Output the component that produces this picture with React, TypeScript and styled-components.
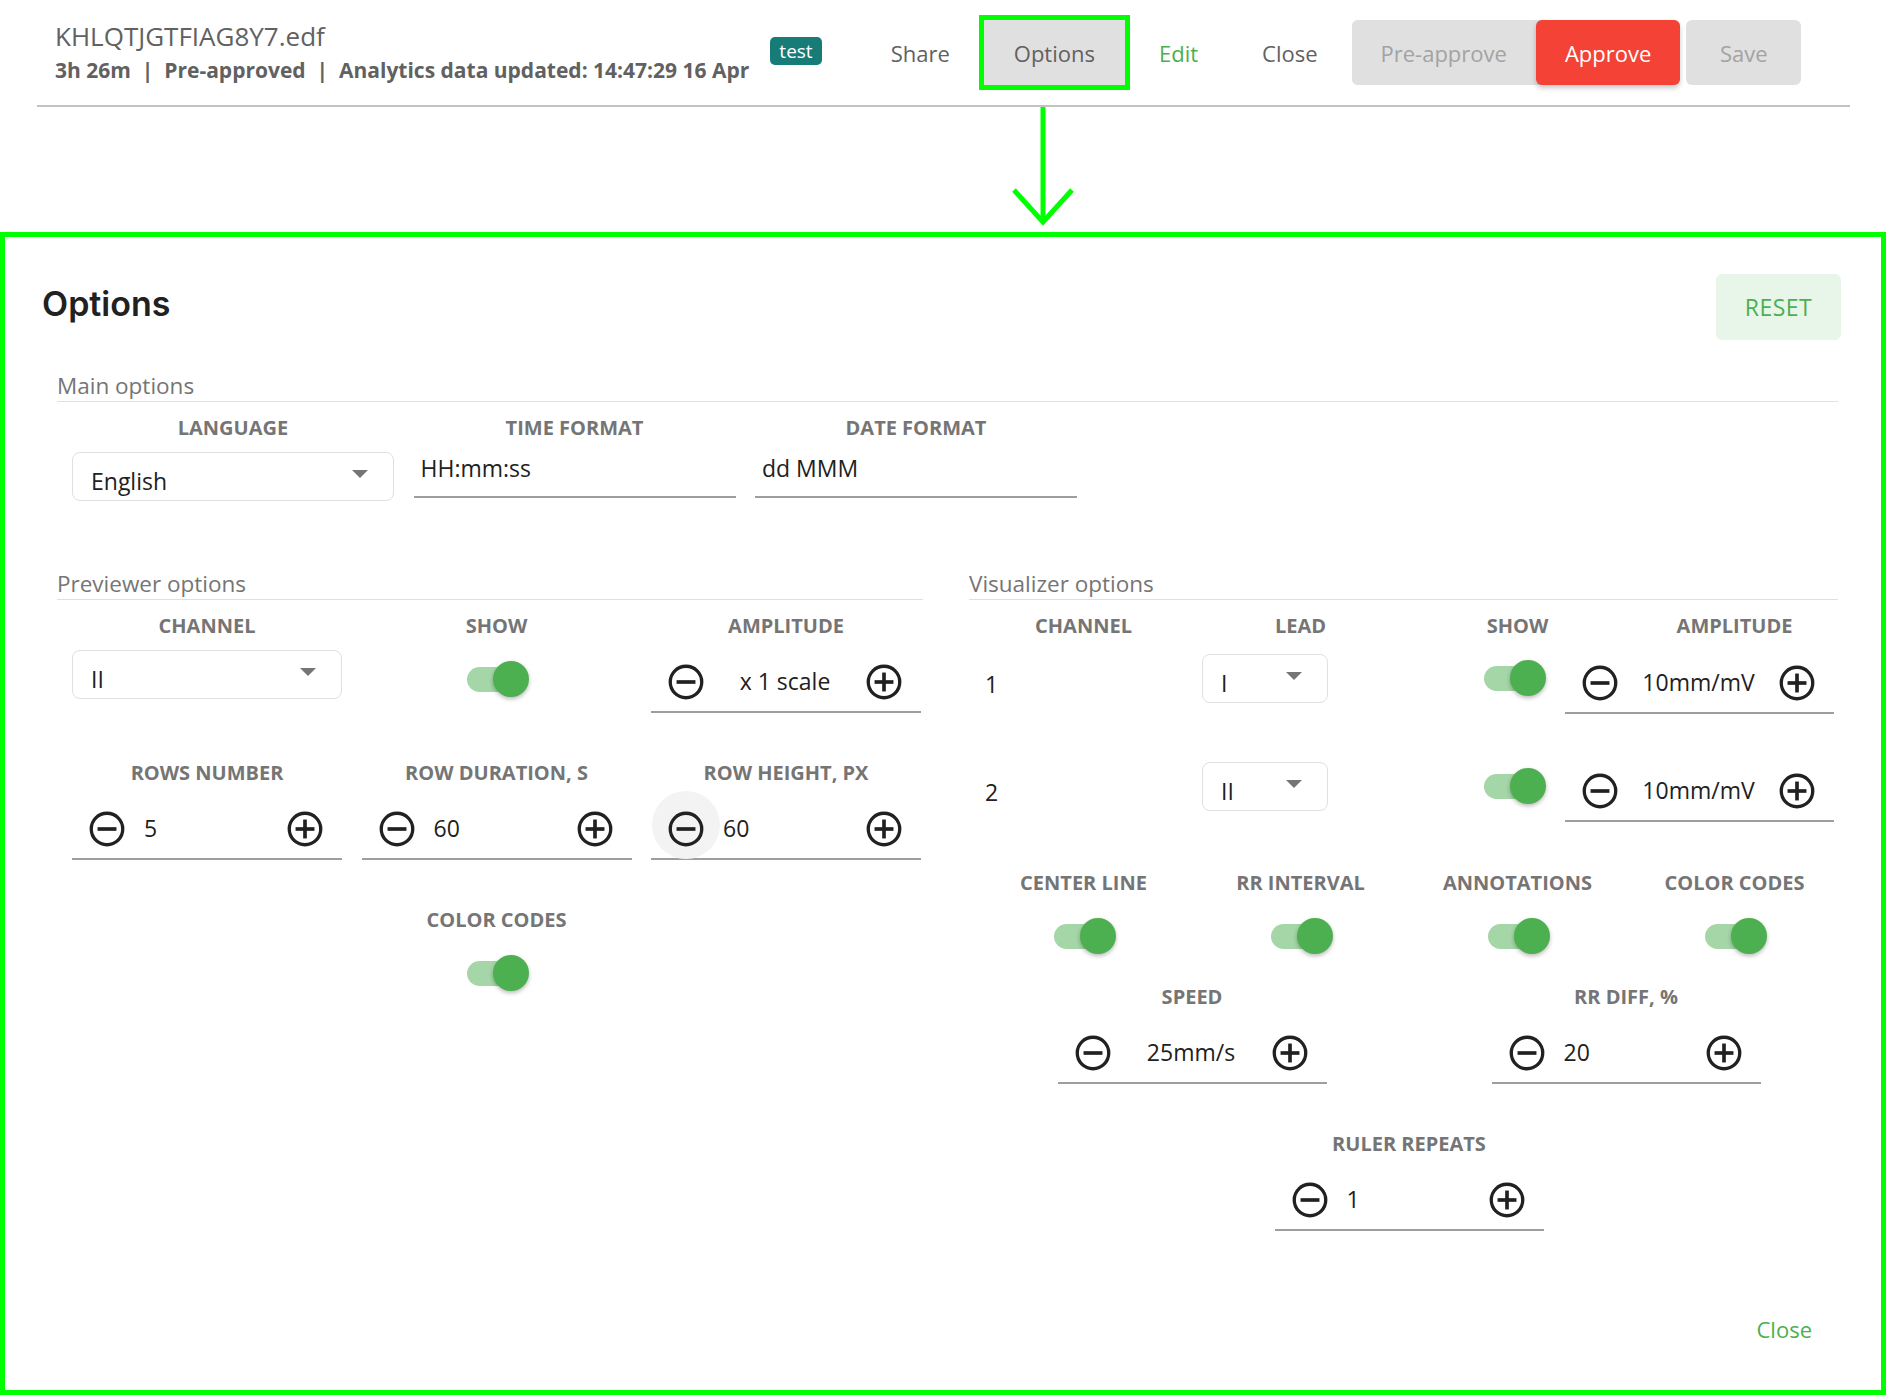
import React from 'react'
import styled, { createGlobalStyle, css } from 'styled-components'

const GREEN = '#4caf50'
const MARK = '#00ff00'

const GlobalStyle = createGlobalStyle`
  html, body {
    margin: 0;
    padding: 0;
    background: #fff;
  }
  body {
    font-family: "Open Sans", "Noto Sans", sans-serif;
    color: #212121;
    overflow: hidden;
  }
  * {
    box-sizing: border-box;
  }
  button, input {
    font-family: inherit;
  }
`

const Page = styled.div`
  width: 1888px;
  height: 1395px;
  display: flex;
  flex-direction: column;
`

/* ---------- header ---------- */

const Header = styled.header`
  margin: 0 38px 0 37px;
  height: 107px;
  flex: none;
  border-bottom: 2px solid #c2c2c2;
  display: flex;
  align-items: center;
  padding-left: 18px;
`

const TitleBlock = styled.div`
  display: flex;
  flex-direction: column;
  color: #616161;
`

const FileName = styled.div`
  font-size: 26px;
  line-height: 32px;
`

const Meta = styled.div`
  font-size: 21px;
  font-weight: 700;
  line-height: 30px;
  margin-top: 3px;
  white-space: nowrap;
`

const Badge = styled.span`
  margin-left: 21px;
  margin-bottom: 3px;
  height: 28px;
  padding: 0 9px;
  border-radius: 5px;
  background: #177c78;
  color: #fff;
  font-size: 19px;
  line-height: 28px;
`

const Nav = styled.nav`
  display: flex;
  align-items: center;
  gap: 4px;
  margin-left: 39px;
`

const NavButton = styled.button<{ $tone?: 'green' | 'muted'; $active?: boolean }>`
  height: 65px;
  padding: 0 30px;
  border: none;
  background: transparent;
  font-size: 22px;
  color: ${p => (p.$tone === 'green' ? GREEN : '#616161')};
  cursor: pointer;
  ${p =>
    p.$active &&
    css`
      background: #e0e0e0;
      outline: 5px solid ${MARK};
    `}
`

const ApproveGroup = styled.div`
  display: flex;
  background: #e0e0e0;
  border-radius: 6px;
`

const GroupButton = styled.button<{ $primary?: boolean }>`
  height: 65px;
  padding: 0 29px;
  border: none;
  border-radius: 6px;
  font-size: 22px;
  background: ${p => (p.$primary ? '#f44336' : '#e0e0e0')};
  color: ${p => (p.$primary ? '#fff' : '#a3a3a3')};
  box-shadow: ${p => (p.$primary ? '0 3px 5px rgba(0, 0, 0, 0.22)' : 'none')};
`

const SaveButton = styled(GroupButton)`
  margin-left: 2px;
  min-width: 115px;
`

/* ---------- arrow annotation ---------- */

const ArrowZone = styled.div`
  height: 125px;
  flex: none;
  padding-left: 1008px;
`

/* ---------- options panel ---------- */

const Panel = styled.section`
  width: 1886px;
  flex: 1;
  min-height: 0;
  border: 5px solid ${MARK};
  padding: 37px 40px 29px 37px;
  display: flex;
  flex-direction: column;
`

const PanelHead = styled.div`
  display: flex;
  justify-content: space-between;
  align-items: center;
  height: 66px;
`

const Heading = styled.h1`
  margin: 0 0 8px;
  font-family: Inter, "Liberation Sans", sans-serif;
  font-weight: 600;
  font-size: 34px;
  color: #212121;
`

const ResetButton = styled.button`
  width: 125px;
  height: 66px;
  border: none;
  border-radius: 6px;
  background: #e8f5e9;
  color: ${GREEN};
  font-size: 23px;
  letter-spacing: 0.5px;
`

const Section = styled.div<{ $width?: number }>`
  ${p => (p.$width ? `width: ${p.$width}px;` : '')}
`

const SectionTitle = styled.div`
  font-size: 22.5px;
  line-height: 30px;
  color: #757575;
  border-bottom: 1px solid #e0e0e0;
`

const MainSection = styled(Section)`
  margin: 31px 3px 0 15px;
`

const Columns = styled.div<{ $cols: number; $width: number; $gap?: number; $rowGap?: number }>`
  display: grid;
  grid-template-columns: repeat(${p => p.$cols}, ${p => p.$width}px);
  column-gap: ${p => p.$gap ?? 0}px;
  row-gap: ${p => p.$rowGap ?? 0}px;
  align-items: start;
  padding-left: 15px;
  margin-top: 14px;
`

const Field = styled.div<{ $col?: number }>`
  display: flex;
  flex-direction: column;
  align-items: stretch;
  ${p => (p.$col ? `grid-column: ${p.$col};` : '')}
`

const Label = styled.div`
  text-align: center;
  font-size: 20px;
  font-weight: 700;
  line-height: 24px;
  color: #757575;
  text-transform: uppercase;
  white-space: nowrap;
  margin-bottom: 12px;
`

const SelectBox = styled.div<{ $width?: number }>`
  height: 49px;
  ${p => (p.$width ? `width: ${p.$width}px;` : '')}
  border: 1px solid #e0e0e0;
  border-radius: 8px;
  display: flex;
  align-items: center;
  justify-content: space-between;
  padding: 0 25px 0 18px;
  font-size: 23px;
`

const SelectText = styled.span`
  margin-top: 8px;
`

const Caret = styled.span`
  width: 0;
  height: 0;
  margin-top: -6px;
  border-left: 8px solid transparent;
  border-right: 8px solid transparent;
  border-top: 8px solid #757575;
`

const TextInput = styled.input`
  height: 46px;
  width: 100%;
  border: none;
  border-bottom: 2px solid #9e9e9e;
  padding: 0 7px 12px;
  font-size: 23px;
  line-height: 32px;
  color: #212121;
  background: transparent;
  outline: none;
`

const Lower = styled.div`
  display: flex;
  gap: 46px;
  margin: 68px 0 0 15px;
`

const StepperBox = styled.div<{ $width?: number; $offset?: boolean }>`
  height: 60px;
  ${p => (p.$width ? `width: ${p.$width}px; align-self: center;` : '')}
  ${p => (p.$offset ? 'margin-top: 3px;' : '')}
  border-bottom: 2px solid #9e9e9e;
  display: flex;
  align-items: center;
  padding: 0 16px 0 14px;
`

const StepValue = styled.span<{ $center?: boolean }>`
  flex: 1;
  font-size: 23px;
  color: #212121;
  text-align: ${p => (p.$center ? 'center' : 'left')};
  padding-left: ${p => (p.$center ? '0' : '16px')};
  margin-top: -2px;
`

const IconButton = styled.button<{ $hover?: boolean }>`
  position: relative;
  width: 42px;
  height: 42px;
  flex: none;
  padding: 0;
  border: none;
  background: none;
  display: flex;
  align-items: center;
  justify-content: center;
  color: #212121;
  cursor: pointer;
  svg {
    position: relative;
  }
  ${p =>
    p.$hover &&
    css`
      &::before {
        content: '';
        position: absolute;
        left: 50%;
        top: 50%;
        width: 68px;
        height: 68px;
        margin: -38px 0 0 -34px;
        border-radius: 50%;
        background: #f3f3f3;
      }
    `}
`

const ToggleWrap = styled.div<{ $h?: number }>`
  height: ${p => p.$h ?? 58}px;
  display: flex;
  align-items: center;
  justify-content: center;
`

const Track = styled.span`
  position: relative;
  width: 60px;
  height: 25px;
  border-radius: 13px;
  background: #a5d6a7;
`

const Thumb = styled.span`
  position: absolute;
  left: 26px;
  top: -5.5px;
  width: 36px;
  height: 36px;
  border-radius: 50%;
  background: ${GREEN};
  box-shadow: 0 2px 4px rgba(0, 0, 0, 0.28);
`

const VisGrid = styled.div<{ $cols: string; $top: number; $rowGap?: number }>`
  display: grid;
  grid-template-columns: ${p => p.$cols};
  row-gap: ${p => p.$rowGap ?? 0}px;
  align-items: start;
  padding-left: 6px;
  margin-top: ${p => p.$top}px;
`

const Cell = styled.div<{ $justify?: string }>`
  height: 60px;
  display: flex;
  align-items: flex-start;
  justify-content: ${p => p.$justify ?? 'flex-start'};
`

const ChannelNo = styled.span`
  font-size: 23px;
  line-height: 60px;
  padding-left: 10px;
`

const Footer = styled.div`
  margin-top: auto;
  display: flex;
  justify-content: flex-end;
`

const FooterButton = styled.button`
  height: 65px;
  padding: 0 29px;
  border: none;
  background: transparent;
  color: ${GREEN};
  font-size: 22px;
`

/* ---------- small parts ---------- */

function RoundIcon({ plus }: { plus?: boolean }) {
  return (
    <svg width="42" height="42" viewBox="0 0 24 24" fill="none" stroke="currentColor">
      <circle cx="12" cy="12" r="9" strokeWidth="1.9" />
      <line x1="6.6" y1="12" x2="17.4" y2="12" strokeWidth="2.1" />
      {plus && <line x1="12" y1="6.6" x2="12" y2="17.4" strokeWidth="2.1" />}
    </svg>
  )
}

function Stepper(props: { value: string; center?: boolean; hover?: boolean; width?: number; offset?: boolean }) {
  return (
    <StepperBox $width={props.width} $offset={props.offset ?? true}>
      <IconButton $hover={props.hover}>
        <RoundIcon />
      </IconButton>
      <StepValue $center={props.center}>{props.value}</StepValue>
      <IconButton>
        <RoundIcon plus />
      </IconButton>
    </StepperBox>
  )
}

function Select({ value, width }: { value: string; width?: number }) {
  return (
    <SelectBox $width={width}>
      <SelectText>{value}</SelectText>
      <Caret />
    </SelectBox>
  )
}

function Toggle({ h }: { h?: number }) {
  return (
    <ToggleWrap $h={h}>
      <Track>
        <Thumb />
      </Track>
    </ToggleWrap>
  )
}

const flags = ['Center line', 'RR interval', 'Annotations', 'Color codes']
const channels = [
  { no: '1', lead: 'I' },
  { no: '2', lead: 'II' }
]

export default function App() {
  return (
    <Page>
      <GlobalStyle />
      <Header>
        <TitleBlock>
          <FileName>KHLQTJGTFIAG8Y7.edf</FileName>
          <Meta>3h 26m&nbsp; | &nbsp;Pre-approved&nbsp; | &nbsp;Analytics data updated: 14:47:29 16 Apr</Meta>
        </TitleBlock>
        <Badge>test</Badge>
        <Nav>
          <NavButton>Share</NavButton>
          <NavButton $active>Options</NavButton>
          <NavButton $tone="green">Edit</NavButton>
          <NavButton>Close</NavButton>
          <ApproveGroup>
            <GroupButton>Pre-approve</GroupButton>
            <GroupButton $primary>Approve</GroupButton>
          </ApproveGroup>
          <SaveButton>Save</SaveButton>
        </Nav>
      </Header>

      <ArrowZone>
        <svg width="70" height="125" viewBox="0 0 70 125" fill="none" stroke={MARK} strokeWidth="5">
          <line x1="35" y1="0" x2="35" y2="114" />
          <polyline points="6,83 35,115 64,83" />
        </svg>
      </ArrowZone>

      <Panel>
        <PanelHead>
          <Heading>Options</Heading>
          <ResetButton>RESET</ResetButton>
        </PanelHead>

        <MainSection>
          <SectionTitle>Main options</SectionTitle>
          <Columns $cols={3} $width={322} $gap={19.5}>
            <Field>
              <Label>Language</Label>
              <Select value="English" />
            </Field>
            <Field>
              <Label>Time format</Label>
              <TextInput readOnly value="HH:mm:ss" />
            </Field>
            <Field>
              <Label>Date format</Label>
              <TextInput readOnly value="dd MMM" />
            </Field>
          </Columns>
        </MainSection>

        <Lower>
          <Section $width={866}>
            <SectionTitle>Previewer options</SectionTitle>
            <Columns $cols={3} $width={270} $gap={19.5} $rowGap={48}>
              <Field>
                <Label>Channel</Label>
                <Select value="II" />
              </Field>
              <Field>
                <Label>Show</Label>
                <Toggle />
              </Field>
              <Field>
                <Label>Amplitude</Label>
                <Stepper value="x 1 scale" center />
              </Field>
              <Field>
                <Label>Rows number</Label>
                <Stepper value="5" />
              </Field>
              <Field>
                <Label>Row duration, s</Label>
                <Stepper value="60" />
              </Field>
              <Field>
                <Label>Row height, px</Label>
                <Stepper value="60" hover />
              </Field>
              <Field $col={2}>
                <Label>Color codes</Label>
                <Toggle />
              </Field>
            </Columns>
          </Section>

          <Section $width={869}>
            <SectionTitle>Visualizer options</SectionTitle>
            <VisGrid $cols="repeat(4, 217px)" $top={14}>
              <Label>Channel</Label>
              <Label>Lead</Label>
              <Label>Show</Label>
              <Label>Amplitude</Label>
            </VisGrid>
            <VisGrid $cols="227px 260px 103px 269px" $top={4} $rowGap={48}>
              {channels.map(c => (
                <React.Fragment key={c.no}>
                  <Cell>
                    <ChannelNo>{c.no}</ChannelNo>
                  </Cell>
                  <Cell>
                    <Select value={c.lead} width={126} />
                  </Cell>
                  <Cell $justify="center">
                    <Toggle h={48} />
                  </Cell>
                  <Stepper value="10mm/mV" center offset={false} />
                </React.Fragment>
              ))}
            </VisGrid>
            <VisGrid $cols="repeat(4, 217px)" $top={49}>
              {flags.map(f => (
                <Field key={f}>
                  <Label>{f}</Label>
                  <Toggle />
                </Field>
              ))}
            </VisGrid>
            <VisGrid $cols="repeat(2, 434px)" $top={20}>
              <Field>
                <Label>Speed</Label>
                <Stepper value="25mm/s" center width={269} />
              </Field>
              <Field>
                <Label>RR diff, %</Label>
                <Stepper value="20" width={269} />
              </Field>
            </VisGrid>
            <VisGrid $cols="868px" $top={48}>
              <Field>
                <Label>Ruler repeats</Label>
                <Stepper value="1" width={269} />
              </Field>
            </VisGrid>
          </Section>
        </Lower>

        <Footer>
          <FooterButton>Close</FooterButton>
        </Footer>
      </Panel>
    </Page>
  )
}
